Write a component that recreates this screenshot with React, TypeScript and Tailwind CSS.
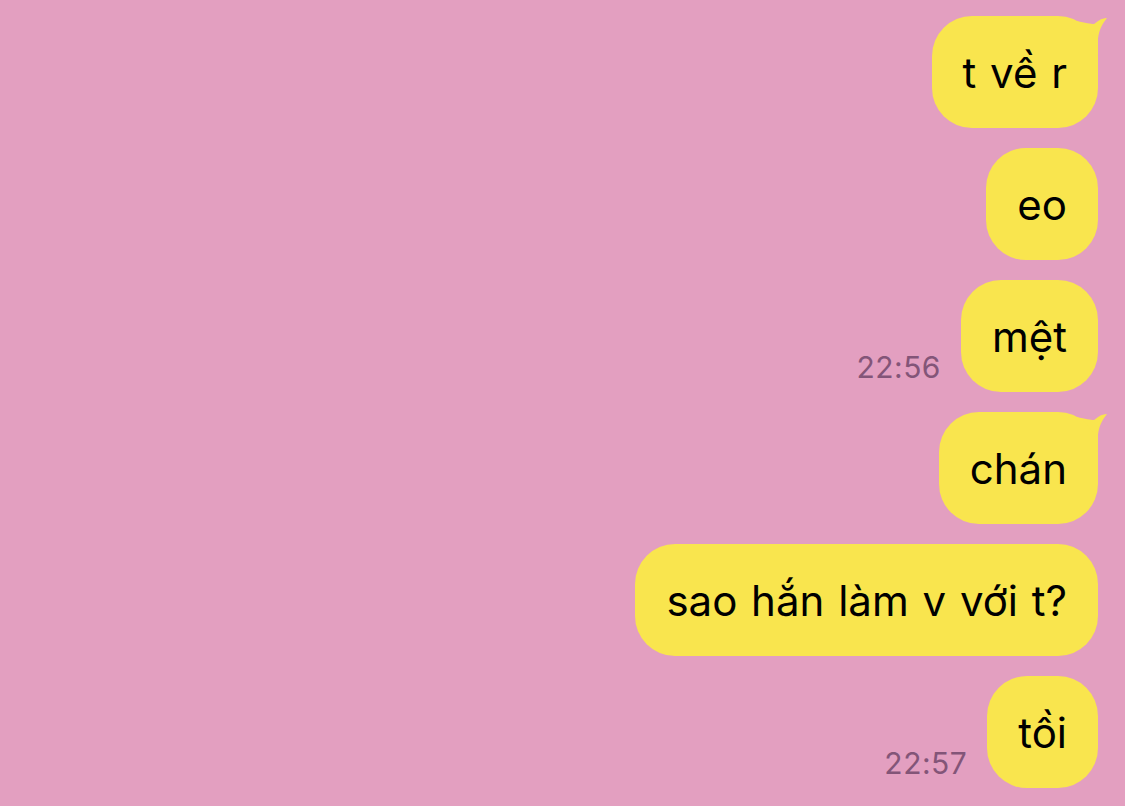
import React from "react";

type Msg = { text: string; time?: string; tail?: boolean };

const messages: Msg[] = [
  { text: "t về r", tail: true },
  { text: "eo" },
  { text: "mệt", time: "22:56" },
  { text: "chán", tail: true },
  { text: "sao hắn làm v với t?" },
  { text: "tồi", time: "22:57" },
];

const Tail = () => (
  <svg
    className="absolute -top-[1px] -right-[9px] w-[30px] h-[40px]"
    viewBox="0 0 30 40"
  >
    <path
      d="M0 6 C8 8 14 9 17 9 C20 7 24 3 30 3 C26 8 22 14 21 24 L21 40 L0 40 Z"
      fill="#f9e54e"
    />
  </svg>
);

const Bubble = ({ msg }: { msg: Msg }) => (
  <div className="flex items-end gap-[20px]">
    {msg.time && (
      <span className="mb-[7px] text-[30px] leading-[36px] tracking-[0.5px] text-[#835578]">
        {msg.time}
      </span>
    )}
    <div className="relative">
      {msg.tail && <Tail />}
      <div className="relative flex h-[112px] items-center rounded-[40px] bg-[#f9e54e] px-[31px] text-[42px] [word-spacing:2px] text-black">
        {msg.text}
      </div>
    </div>
  </div>
);

const App = () => {
  return (
    <div
      className="flex h-[806px] w-[1125px] flex-col items-end gap-[20px] overflow-hidden bg-[#e39fc0] pt-[16px] pr-[27px]"
      style={{ fontFamily: "Inter, 'Noto Sans', sans-serif" }}
    >
      {messages.map((m, i) => (
        <Bubble key={i} msg={m} />
      ))}
    </div>
  );
};

export default App;
